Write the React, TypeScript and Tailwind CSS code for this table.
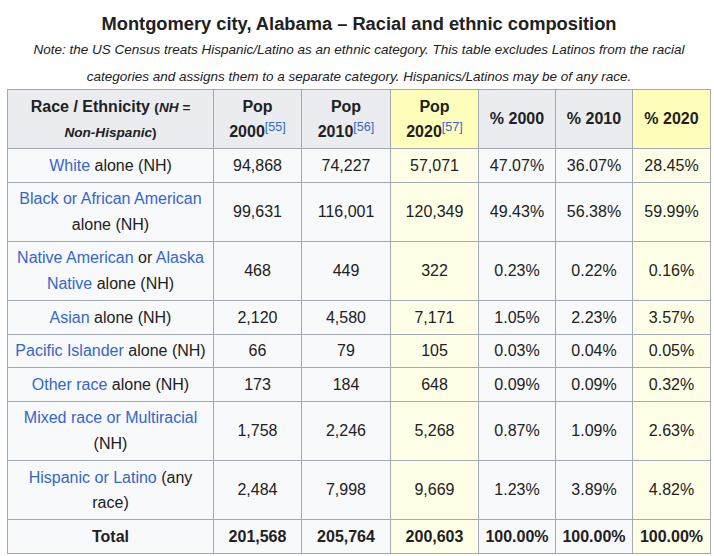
import React from "react";

const A = ({ children }: { children: React.ReactNode }) => (
  <span className="text-[#3366cc]">{children}</span>
);

const Sup = ({ n }: { n: string }) => (
  <sup className="text-[#3366cc] font-normal text-[12.6px]">[{n}]</sup>
);

type Row = { label: React.ReactNode; v: string[] };

const rows: Row[] = [
  { label: <><A>White</A> alone (NH)</>, v: ["94,868", "74,227", "57,071", "47.07%", "36.07%", "28.45%"] },
  { label: <><A>Black or African American</A> alone (NH)</>, v: ["99,631", "116,001", "120,349", "49.43%", "56.38%", "59.99%"] },
  { label: <><A>Native American</A> or <A>Alaska Native</A> alone (NH)</>, v: ["468", "449", "322", "0.23%", "0.22%", "0.16%"] },
  { label: <><A>Asian</A> alone (NH)</>, v: ["2,120", "4,580", "7,171", "1.05%", "2.23%", "3.57%"] },
  { label: <><A>Pacific Islander</A> alone (NH)</>, v: ["66", "79", "105", "0.03%", "0.04%", "0.05%"] },
  { label: <><A>Other race</A> alone (NH)</>, v: ["173", "184", "648", "0.09%", "0.09%", "0.32%"] },
  { label: <><A>Mixed race or Multiracial</A> (NH)</>, v: ["1,758", "2,246", "5,268", "0.87%", "1.09%", "2.63%"] },
  { label: <><A>Hispanic or Latino</A> (any race)</>, v: ["2,484", "7,998", "9,669", "1.23%", "3.89%", "4.82%"] },
];

const total = ["201,568", "205,764", "200,603", "100.00%", "100.00%", "100.00%"];

const yellowCols = new Set([2, 5]);

export default function App() {
  return (
    <div
      className="bg-white w-[714px] h-[556px] text-[#202122] text-[16px] leading-[1.6] pl-[7px] pt-[10px]"
      style={{ fontFamily: '"Liberation Sans", Arial, sans-serif' }}
    >
      <table className="border-collapse table-fixed w-[703px] border border-[#a2a9b1] bg-[#f8f9fa]">
        <caption className="bg-white">
          <div className="font-bold text-[18.3px] leading-[26px] pt-[1px]">
            Montgomery city, Alabama – Racial and ethnic composition
          </div>
          <div className="italic text-[13.5px] leading-[26.5px] -mb-[1px]">
            Note: the US Census treats Hispanic/Latino as an ethnic category. This table excludes Latinos from the racial
            categories and assigns them to a separate category. Hispanics/Latinos may be of any race.
          </div>
        </caption>
        <colgroup>
          <col className="w-[206px]" />
          <col className="w-[88px]" />
          <col className="w-[89px]" />
          <col className="w-[88px]" />
          <col className="w-[77px]" />
          <col className="w-[77px]" />
          <col className="w-[78px]" />
        </colgroup>
        <thead>
          <tr>
            <th className="border border-[#a2a9b1] bg-[#eaecf0] px-[6.4px] py-[3.5px] font-bold text-center align-middle">
              Race / Ethnicity{" "}
              <span className="text-[13.6px]">
                (<i>NH = Non-Hispanic</i>)
              </span>
            </th>
            <th className="border border-[#a2a9b1] bg-[#eaecf0] px-[6.4px] py-[3.5px] font-bold text-center">
              Pop 2000<Sup n="55" />
            </th>
            <th className="border border-[#a2a9b1] bg-[#eaecf0] px-[6.4px] py-[3.5px] font-bold text-center">
              Pop 2010<Sup n="56" />
            </th>
            <th className="border border-[#a2a9b1] bg-[#ffffbb] px-[6.4px] py-[3.5px] font-bold text-center">
              Pop 2020<Sup n="57" />
            </th>
            <th className="border border-[#a2a9b1] bg-[#eaecf0] px-[6.4px] py-[3.5px] font-bold text-center">% 2000</th>
            <th className="border border-[#a2a9b1] bg-[#eaecf0] px-[6.4px] py-[3.5px] font-bold text-center">% 2010</th>
            <th className="border border-[#a2a9b1] bg-[#ffffbb] px-[6.4px] py-[3.5px] font-bold text-center">% 2020</th>
          </tr>
        </thead>
        <tbody>
          {rows.map((r, i) => (
            <tr key={i}>
              <td className="border border-[#a2a9b1] px-[6.4px] py-[3.5px] text-center align-middle">{r.label}</td>
              {r.v.map((c, j) => (
                <td
                  key={j}
                  className={
                    yellowCols.has(j)
                      ? "border border-[#a2a9b1] px-[6.4px] py-[3.5px] text-center align-middle bg-[#ffffe8]"
                      : "border border-[#a2a9b1] px-[6.4px] py-[3.5px] text-center align-middle"
                  }
                >
                  {c}
                </td>
              ))}
            </tr>
          ))}
          <tr className="font-bold">
            <td className="border border-[#a2a9b1] px-[6.4px] py-[3.5px] text-center">Total</td>
            {total.map((c, j) => (
              <td
                key={j}
                className={
                  yellowCols.has(j)
                    ? "border border-[#a2a9b1] px-[4px] py-[3.5px] text-center bg-[#ffffe8]"
                    : "border border-[#a2a9b1] px-[4px] py-[3.5px] text-center"
                }
              >
                {c}
              </td>
            ))}
          </tr>
        </tbody>
      </table>
    </div>
  );
}
